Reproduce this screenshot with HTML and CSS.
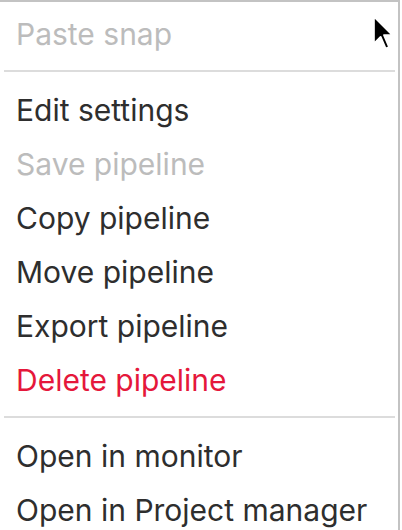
FILE: index.html
```html
<!DOCTYPE html>
<html lang="en">
<head>
<meta charset="utf-8">
<title>Context menu</title>
<link rel="stylesheet" href="styles.css">
</head>
<body>
<div class="menu">
  <div class="item disabled">Paste snap</div>
  <div class="sep"></div>
  <div class="item">Edit settings</div>
  <div class="item disabled">Save pipeline</div>
  <div class="item">Copy pipeline</div>
  <div class="item">Move pipeline</div>
  <div class="item">Export pipeline</div>
  <div class="item danger">Delete pipeline</div>
  <div class="sep"></div>
  <div class="item">Open in monitor</div>
  <div class="item">Open in Project manager</div>
</div>
<svg class="cursor" width="24" height="37" viewBox="-1 -1 14 22" aria-hidden="true">
  <path d="M0 0 L0 16 L4 12 L7 19 L9 18 L6 11 L11 11 Z" fill="#000" stroke="#fff" stroke-width="1.1" stroke-linejoin="round"/>
</svg>
</body>
</html>
```

FILE: styles.css
```css
html, body {
  margin: 0;
  padding: 0;
  background: #ffffff;
}

body {
  width: 402px;
  height: 530px;
  overflow: hidden;
  position: relative;
  font-family: Inter, "Noto Sans", sans-serif;
}

.menu {
  width: 400px;
  height: 530px;
  background: #ffffff;
  border-top: 2px solid #c3c3c3;
  border-right: 2px solid #c3c3c3;
  padding-top: 5px;
  box-sizing: border-box;
  display: flex;
  flex-direction: column;
}

.item {
  height: 54px;
  line-height: 54px;
  padding-left: 16px;
  font-size: 30px;
  color: #2e2e2e;
  white-space: nowrap;
  flex: none;
}

.item.disabled {
  color: #bcbcbc;
}

.item.danger {
  color: #e5173b;
}

.sep {
  height: 2px;
  background: #dcdcdc;
  margin: 9px 3px 11px 4px;
  flex: none;
}

.cursor {
  position: absolute;
  left: 372px;
  top: 15px;
}
```
